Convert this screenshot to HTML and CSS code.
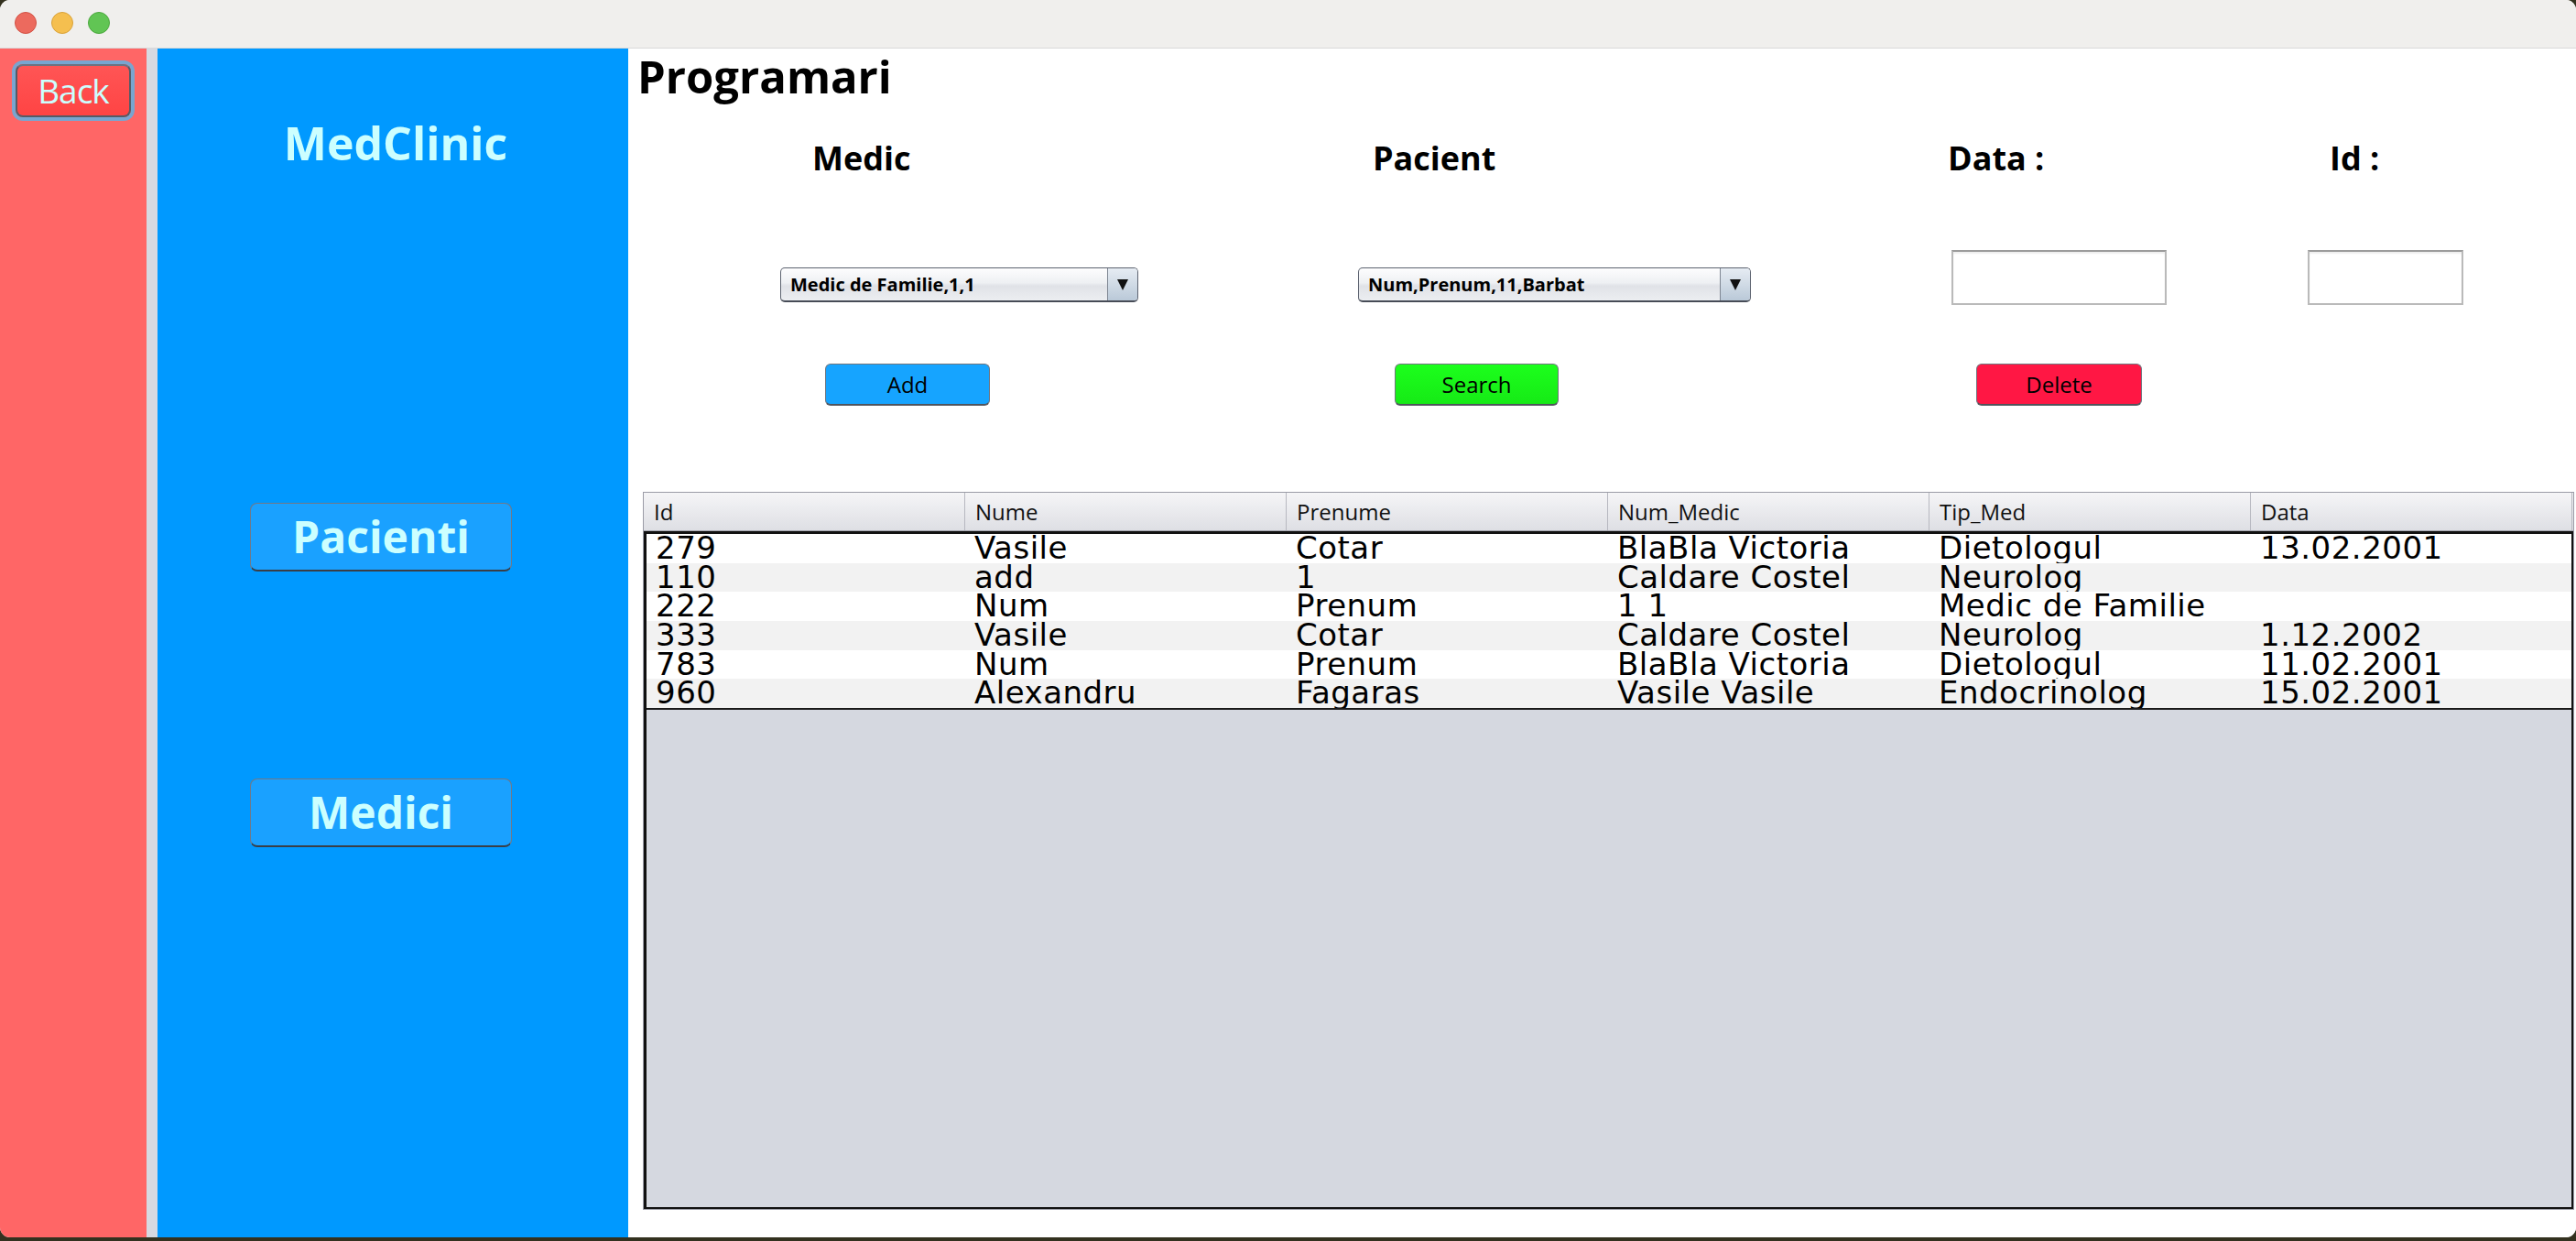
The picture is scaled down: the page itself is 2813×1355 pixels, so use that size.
FILE: index.html
```html
<!DOCTYPE html>
<html lang="ro">
<head>
<meta charset="utf-8">
<title>Programari</title>
<link rel="stylesheet" href="styles.css">
</head>
<body>
<div class="window">
  <div class="titlebar">
    <span class="light light-red"></span>
    <span class="light light-yellow"></span>
    <span class="light light-green"></span>
  </div>
  <div class="main">
    <aside class="side-red">
      <button class="back">Back</button>
    </aside>
    <div class="divider"></div>
    <nav class="side-blue">
      <div class="brand">MedClinic</div>
      <button class="nav-btn nav-pacienti">Pacienti</button>
      <button class="nav-btn nav-medici">Medici</button>
    </nav>
    <section class="content">
      <h1 class="title">Programari</h1>
      <div class="labels">
        <span class="lbl lbl-medic">Medic</span>
        <span class="lbl lbl-pacient">Pacient</span>
        <span class="lbl lbl-data">Data :</span>
        <span class="lbl lbl-id">Id :</span>
      </div>
      <div class="fields">
        <div class="combo combo-medic">
          <span class="combo-text">Medic de Familie,1,1</span>
          <span class="combo-arrow"></span>
        </div>
        <div class="combo combo-pacient">
          <span class="combo-text">Num,Prenum,11,Barbat</span>
          <span class="combo-arrow"></span>
        </div>
        <div class="tf tf-data"></div>
        <div class="tf tf-id"></div>
      </div>
      <div class="actions">
        <button class="btn btn-add">Add</button>
        <button class="btn btn-search">Search</button>
        <button class="btn btn-delete">Delete</button>
      </div>
      <div class="table">
        <div class="thead">
          <div class="th">Id</div>
          <div class="th">Nume</div>
          <div class="th">Prenume</div>
          <div class="th">Num_Medic</div>
          <div class="th">Tip_Med</div>
          <div class="th">Data</div>
        </div>
        <div class="viewport">
          <div class="rows">
            <div class="row"><div class="td">279</div><div class="td">Vasile</div><div class="td">Cotar</div><div class="td">BlaBla Victoria</div><div class="td">Dietologul</div><div class="td">13.02.2001</div></div>
            <div class="row"><div class="td">110</div><div class="td">add</div><div class="td">1</div><div class="td">Caldare Costel</div><div class="td">Neurolog</div><div class="td"></div></div>
            <div class="row"><div class="td">222</div><div class="td">Num</div><div class="td">Prenum</div><div class="td">1 1</div><div class="td">Medic de Familie</div><div class="td"></div></div>
            <div class="row"><div class="td">333</div><div class="td">Vasile</div><div class="td">Cotar</div><div class="td">Caldare Costel</div><div class="td">Neurolog</div><div class="td">1.12.2002</div></div>
            <div class="row"><div class="td">783</div><div class="td">Num</div><div class="td">Prenum</div><div class="td">BlaBla Victoria</div><div class="td">Dietologul</div><div class="td">11.02.2001</div></div>
            <div class="row"><div class="td">960</div><div class="td">Alexandru</div><div class="td">Fagaras</div><div class="td">Vasile Vasile</div><div class="td">Endocrinolog</div><div class="td">15.02.2001</div></div>
          </div>
        </div>
      </div>
    </section>
  </div>
</div>
</body>
</html>
```

FILE: styles.css
```css
* { box-sizing: border-box; }

body {
  margin: 0;
  width: 2813px;
  height: 1355px;
  overflow: hidden;
  background: #33311f;
  font-family: "Open Sans", "DejaVu Sans", sans-serif;
}

.window {
  height: 1351px;
  border-radius: 11px;
  overflow: hidden;
  display: flex;
  flex-direction: column;
  background: #ffffff;
}

/* title bar */
.titlebar {
  flex: none;
  height: 53px;
  background: #f0efed;
  border-bottom: 1px solid #d9d9d9;
  display: flex;
  align-items: center;
  gap: 16px;
  padding: 0 0 2px 16px;
}
.light {
  width: 24px;
  height: 24px;
  border-radius: 50%;
  border: 1px solid;
}
.light-red { background: #ec6a5e; border-color: #d25245; }
.light-yellow { background: #f5bf4f; border-color: #d9a23a; }
.light-green { background: #61c554; border-color: #4ca83f; }

.main {
  flex: 1;
  display: flex;
  min-height: 0;
}

/* red sidebar */
.side-red {
  width: 160px;
  flex: none;
  background: #ff6666;
  padding: 17px 0 0 17px;
}
.back {
  display: block;
  width: 126px;
  height: 58px;
  padding: 0;
  border: 2px solid #565b66;
  border-top-color: #6c7282;
  border-radius: 8px;
  background: linear-gradient(#ff5555, #ff4444);
  box-shadow: 0 0 0 4px #79a5d0;
  color: #ccffff;
  font: 37px/54px "Open Sans", sans-serif;
  letter-spacing: -1px;
  text-align: center;
}

.divider {
  width: 12px;
  flex: none;
  background: #d6d9e1;
}

/* blue sidebar */
.side-blue {
  width: 514px;
  flex: none;
  background: #0099ff;
  display: flex;
  flex-direction: column;
  align-items: flex-start;
}
.brand {
  align-self: stretch;
  margin-top: 73px;
  padding-left: 6px;
  text-align: center;
  font: bold 50px/60px "Open Sans", sans-serif;
  color: #ccffff;
}
.nav-btn {
  margin-left: 101px;
  width: 286px;
  height: 75px;
  padding: 0;
  border: 1px solid #727885;
  border-bottom: 2px solid #3a3e46;
  border-radius: 8px;
  background: #1aa1ff;
  color: #ccffff;
  font: bold 48px/72px "Open Sans", sans-serif;
  text-align: center;
}
.nav-pacienti { margin-top: 363px; }
.nav-medici { margin-top: 226px; }

/* content */
.content {
  flex: 1;
  min-width: 0;
  display: flex;
  flex-direction: column;
  background: #ffffff;
}
.title {
  margin: 0 0 0 10px;
  font: bold 49px/60px "Open Sans", sans-serif;
  color: #000;
}

.labels {
  margin-top: 38px;
  height: 44px;
  display: flex;
  padding-left: 201px;
  font: bold 36px/44px "Open Sans", sans-serif;
  color: #000;
}
.lbl-medic { width: 612px; }
.lbl-pacient { width: 628px; }
.lbl-data { width: 417px; }

.fields {
  margin-top: 78px;
  display: flex;
  align-items: flex-start;
  padding-left: 166px;
}
.combo {
  margin-top: 19px;
  height: 38px;
  display: flex;
  border: 1px solid #5d6370;
  border-bottom: 2px solid #474c57;
  border-radius: 5px;
  overflow: hidden;
  background: linear-gradient(#fdfdfe 0%, #eef0f3 45%, #e0e2e7 55%, #eceef1 100%);
}
.combo-medic { width: 391px; }
.combo-pacient { width: 429px; margin-left: 240px; }
.combo-text {
  flex: 1;
  padding-left: 10px;
  font: bold 20px/35px "Open Sans", sans-serif;
  color: #000;
  white-space: nowrap;
}
.combo-arrow {
  width: 33px;
  flex: none;
  border-left: 1px solid #7f8793;
  background: linear-gradient(#e6ecf3, #bac9d8);
  display: flex;
  align-items: center;
  justify-content: center;
}
.combo-arrow::after {
  content: "";
  border-left: 6px solid transparent;
  border-right: 6px solid transparent;
  border-top: 12px solid #111;
}

.tf {
  height: 60px;
  border: 2px solid #bababa;
  border-top-color: #9c9c9c;
  background: #ffffff;
  box-shadow: inset 0 2px 2px rgba(0, 0, 0, 0.07);
}
.tf-data { width: 235px; margin-left: 219px; }
.tf-id { width: 170px; margin-left: 154px; }

.actions {
  margin-top: 64px;
  display: flex;
  padding-left: 215px;
}
.btn {
  height: 46px;
  padding: 0;
  border: 1px solid #70757e;
  border-bottom: 2px solid #50545c;
  border-radius: 6px;
  font: 24px/43px "Open Sans", sans-serif;
  color: #000;
  text-align: center;
}
.btn-add { width: 180px; background: #16a4ff; }
.btn-search { width: 179px; margin-left: 442px; background: linear-gradient(#1cff1c, #16ea16); }
.btn-delete { width: 181px; margin-left: 456px; background: #ff1744; }

/* table */
.table {
  margin: 94px 2px 0 16px;
  height: 784px;
  border: 1px solid #9a9ba6;
  display: flex;
  flex-direction: column;
}
.thead {
  flex: none;
  height: 42px;
  display: flex;
  border-bottom: 1px solid #a3a4ad;
  background: linear-gradient(#f5f5f7, #dedfe4);
}
.th {
  width: 351px;
  flex: none;
  border-right: 1px solid #b7b8c0;
  padding-left: 11px;
  font: 24px/41px "Open Sans", sans-serif;
  color: #111;
}
.viewport {
  flex: 1;
  border: 3px solid #111;
  border-right-width: 2px;
  border-bottom-width: 2px;
  background: #d5d8e0;
}
.rows {
  border-bottom: 2px solid #1a1a1a;
}
.row {
  height: 31.67px;
  display: flex;
  overflow: hidden;
  background: #ffffff;
}
.row:nth-child(even) { background: #f2f2f2; }
.td {
  width: 351px;
  flex: none;
  padding-left: 11px;
  overflow: hidden;
  white-space: nowrap;
  font: 34px/31px "DejaVu Sans", sans-serif;
  letter-spacing: 0.5px;
  color: #000;
}
.td:first-child {
  width: 347px;
  padding-left: 10px;
}
```
